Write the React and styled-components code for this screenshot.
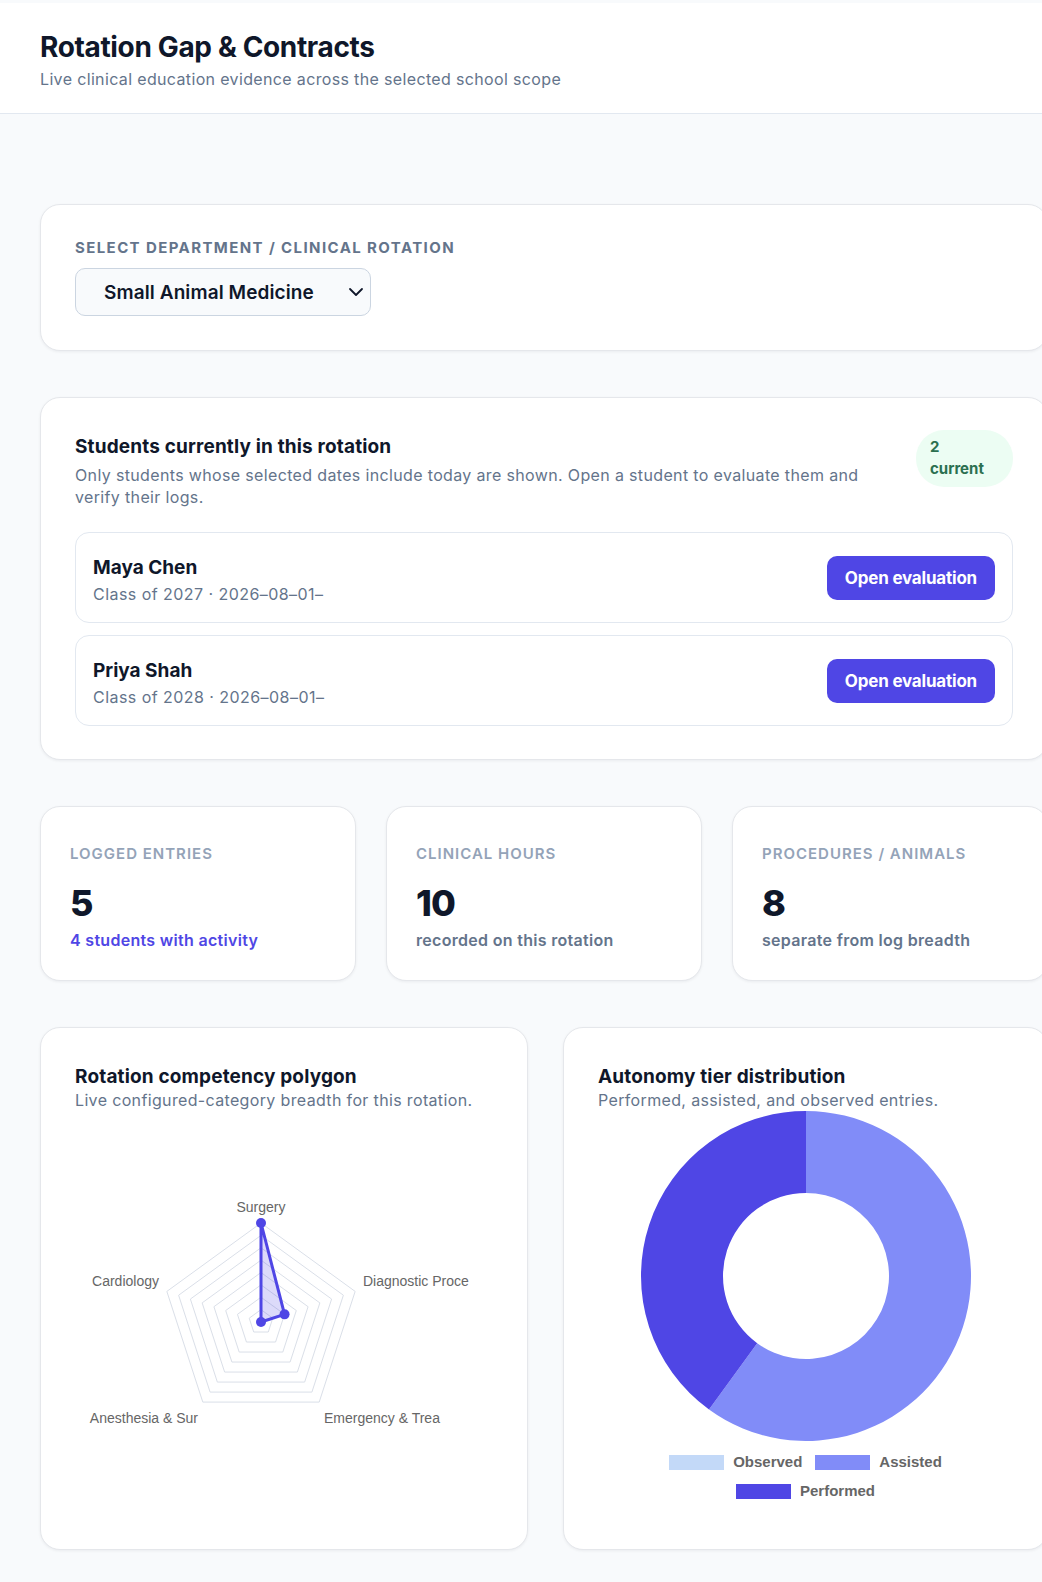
import React from 'react';
import styled, { createGlobalStyle } from 'styled-components';
import { ChevronDown } from 'lucide-react';

const GlobalStyle = createGlobalStyle`
  html, body {
    margin: 0;
    background: #f8fafc;
  }
  body {
    font-family: Inter, 'Noto Sans', sans-serif;
    color: #0f172a;
    -webkit-font-smoothing: antialiased;
  }
  * { box-sizing: border-box; }
`;

const Page = styled.div`
  padding-top: 3px;
  overflow-x: hidden;
  min-height: 1582px;
`;

const Header = styled.header`
  background: #fff;
  border-bottom: 1px solid #e2e8f0;
  padding: 26px 40px 23px;
`;

const Title = styled.h1`
  margin: 0 0 3px;
  font-size: 28px;
  line-height: 36px;
  font-weight: 700;
  letter-spacing: -0.35px;
  color: #0f172a;
`;

const Subtitle = styled.p`
  margin: 0;
  font-size: 16px;
  line-height: 22px;
  color: #64748b;
  letter-spacing: 0.35px;
`;

const Main = styled.main`
  width: 1048px;
  padding: 90px 0 48px 40px;
  display: flex;
  flex-direction: column;
  gap: 46px;
`;

const Card = styled.section`
  background: #fff;
  border: 1px solid #e5e7eb;
  border-radius: 20px;
  box-shadow: 0 1px 3px rgba(15, 23, 42, 0.06);
  padding: ${p => p.$pad || '33px 34px'};
`;

const FieldLabel = styled.label`
  display: block;
  font-size: 15px;
  line-height: 20px;
  font-weight: 700;
  letter-spacing: 1.4px;
  text-transform: uppercase;
  color: #64748b;
  margin-bottom: 10px;
`;

const Select = styled.div`
  width: 296px;
  height: 48px;
  border: 1px solid #cbd5e1;
  border-radius: 10px;
  background: #f8fafc;
  display: flex;
  align-items: center;
  justify-content: space-between;
  padding: 0 2px 0 28px;
  font-size: 19px;
  font-weight: 600;
  letter-spacing: 0.1px;
  color: #0f172a;
`;

const SectionHead = styled.div`
  display: flex;
  align-items: flex-start;
  gap: 40px;
  margin-bottom: 24px;
`;

const HeadText = styled.div`
  flex: 1;
`;

const CardTitle = styled.h2`
  margin: 0;
  font-size: 19px;
  line-height: ${p => p.$lh || '24px'};
  font-weight: 700;
  letter-spacing: 0.15px;
  color: #0f172a;
`;

const CardText = styled.p`
  margin: ${p => p.$mt || '0'} 0 0;
  font-size: 16px;
  line-height: 22px;
  color: #64748b;
  letter-spacing: 0.35px;
`;

const Badge = styled.div`
  display: flex;
  flex-direction: column;
  width: 97px;
  margin-top: -2px;
  padding: 6px 14px 7px;
  border-radius: 28px;
  background: #ecfdf3;
  color: #2b7050;
  font-size: 15px;
  line-height: 22px;
  font-weight: 700;
`;

const StudentList = styled.div`
  display: flex;
  flex-direction: column;
  gap: 12px;
`;

const StudentRow = styled.div`
  height: 91px;
  border: 1px solid #e2e8f0;
  border-radius: 14px;
  display: flex;
  align-items: center;
  justify-content: space-between;
  padding: 6px 17px 0;
`;

const StudentName = styled.div`
  font-size: 19px;
  line-height: 24px;
  font-weight: 700;
  color: #0f172a;
`;

const StudentMeta = styled.div`
  margin-top: 3px;
  font-size: 16px;
  line-height: 22px;
  color: #64748b;
  letter-spacing: 0.45px;
`;

const PrimaryButton = styled.button`
  height: 44px;
  padding: 0 18px;
  border: none;
  border-radius: 10px;
  background: #4f46e5;
  color: #fff;
  font-family: inherit;
  font-size: 17px;
  font-weight: 700;
  letter-spacing: -0.2px;
  margin-top: -6px;
  cursor: pointer;
`;

const StatGrid = styled.div`
  display: grid;
  grid-template-columns: repeat(3, 1fr);
  gap: 30px;
`;

const StatLabel = styled.div`
  font-size: 15px;
  line-height: 20px;
  font-weight: 600;
  letter-spacing: 1px;
  text-transform: uppercase;
  color: #94a3b8;
`;

const StatValue = styled.div`
  margin-top: 19px;
  font-size: 36px;
  line-height: 40px;
  font-weight: 800;
  letter-spacing: -1px;
  color: #0f172a;
`;

const StatNote = styled.div`
  margin-top: 6px;
  font-size: 16px;
  line-height: 22px;
  font-weight: 600;
  letter-spacing: 0.3px;
  color: ${p => (p.$accent ? '#4f46e5' : '#64748b')};
`;

const ChartGrid = styled.div`
  display: grid;
  grid-template-columns: 1fr 1fr;
  gap: 35px;
`;

const ChartArea = styled.div`
  display: flex;
  flex-direction: column;
  align-items: center;
`;

const Legend = styled.div`
  display: flex;
  flex-wrap: wrap;
  justify-content: center;
  max-width: 290px;
  column-gap: 13px;
  row-gap: 9px;
  margin-top: 11px;
`;

const LegendItem = styled.div`
  display: flex;
  align-items: center;
  gap: 9px;
  font-family: 'Liberation Sans', Arial, sans-serif;
  font-size: 15px;
  line-height: 20px;
  font-weight: 700;
  color: #666;
`;

const Swatch = styled.span`
  width: 55px;
  height: 15px;
  background: ${p => p.$color};
`;

const students = [
  { name: 'Maya Chen', meta: 'Class of 2027 · 2026–08–01–' },
  { name: 'Priya Shah', meta: 'Class of 2028 · 2026–08–01–' },
];

const stats = [
  { label: 'Logged entries', value: '5', note: '4 students with activity', accent: true },
  { label: 'Clinical hours', value: '10', note: 'recorded on this rotation' },
  { label: 'Procedures / animals', value: '8', note: 'separate from log breadth' },
];

const RADAR = { cx: 186, cy: 211, r: 99, rings: 8 };

const axes = [
  { label: 'Surgery', value: 1, x: 186, y: 101, anchor: 'middle' },
  { label: 'Diagnostic Proce', value: 0.25, x: 288, y: 175, anchor: 'start' },
  { label: 'Emergency & Trea', value: 0, x: 249, y: 312, anchor: 'start' },
  { label: 'Anesthesia & Sur', value: 0, x: 123, y: 312, anchor: 'end' },
  { label: 'Cardiology', value: 0, x: 84, y: 175, anchor: 'end' },
];

const radarPoint = (i, frac) => {
  const a = (i * 72 * Math.PI) / 180;
  return [RADAR.cx + frac * RADAR.r * Math.sin(a), RADAR.cy - frac * RADAR.r * Math.cos(a)];
};

const RadarChart = () => {
  const rings = Array.from({ length: RADAR.rings }, (_, k) => (k + 1) / RADAR.rings);
  const data = axes.map((ax, i) => radarPoint(i, ax.value));
  return (
    <svg width="418" height="389" viewBox="0 0 418 389">
      {rings.map(f => (
        <polygon
          key={f}
          points={axes.map((_, i) => radarPoint(i, f).join(',')).join(' ')}
          fill="none"
          stroke="#dadfe8"
          strokeWidth="1"
        />
      ))}
      <polygon
        points={data.map(p => p.join(',')).join(' ')}
        fill="rgba(79, 70, 229, 0.2)"
        stroke="#4f46e5"
        strokeWidth="3"
        strokeLinejoin="round"
      />
      {[data[0], data[1], data[2]].map((p, i) => (
        <circle key={i} cx={p[0]} cy={p[1]} r="5" fill="#4f46e5" />
      ))}
      {axes.map(ax => (
        <text
          key={ax.label}
          x={ax.x}
          y={ax.y}
          textAnchor={ax.anchor}
          fontFamily="'Liberation Sans', Arial, sans-serif"
          fontSize="14"
          fill="#666"
        >
          {ax.label}
        </text>
      ))}
    </svg>
  );
};

const arcPath = (cx, cy, R, r, a0, a1) => {
  const rad = a => ((a - 90) * Math.PI) / 180;
  const p = (rr, a) => [cx + rr * Math.cos(rad(a)), cy + rr * Math.sin(rad(a))];
  const large = a1 - a0 > 180 ? 1 : 0;
  const [x0, y0] = p(R, a0);
  const [x1, y1] = p(R, a1);
  const [x2, y2] = p(r, a1);
  const [x3, y3] = p(r, a0);
  return `M${x0} ${y0} A${R} ${R} 0 ${large} 1 ${x1} ${y1} L${x2} ${y2} A${r} ${r} 0 ${large} 0 ${x3} ${y3} Z`;
};

const tiers = [
  { label: 'Observed', value: 0, color: '#c3d9f8' },
  { label: 'Assisted', value: 3, color: '#818cf8' },
  { label: 'Performed', value: 2, color: '#4f46e5' },
];

const DonutChart = () => {
  const total = tiers.reduce((s, t) => s + t.value, 0);
  let start = 0;
  const slices = tiers
    .filter(t => t.value > 0)
    .map(t => {
      const end = start + (t.value / total) * 360;
      const d = arcPath(165, 165, 165, 83, start, end);
      start = end;
      return <path key={t.label} d={d} fill={t.color} />;
    });
  return (
    <svg width="330" height="330" viewBox="0 0 330 330">
      {slices}
    </svg>
  );
};

const App = () => {
  return (
    <Page>
      <GlobalStyle />
      <Header>
        <Title>Rotation Gap &amp; Contracts</Title>
        <Subtitle>Live clinical education evidence across the selected school scope</Subtitle>
      </Header>
      <Main>
        <Card $pad="33px 34px 34px">
          <FieldLabel>Select department / clinical rotation</FieldLabel>
          <Select>
            Small Animal Medicine
            <ChevronDown size={24} strokeWidth={1.8} color="#0f172a" />
          </Select>
        </Card>

        <Card $pad="34px 34px 33px">
          <SectionHead>
            <HeadText>
              <CardTitle $lh="30px">Students currently in this rotation</CardTitle>
              <CardText $mt="2px">
                Only students whose selected dates include today are shown. Open a student to evaluate them and verify their logs.
              </CardText>
            </HeadText>
            <Badge>
              <span>2</span>
              <span>current</span>
            </Badge>
          </SectionHead>
          <StudentList>
            {students.map(s => (
              <StudentRow key={s.name}>
                <div>
                  <StudentName>{s.name}</StudentName>
                  <StudentMeta>{s.meta}</StudentMeta>
                </div>
                <PrimaryButton>Open evaluation</PrimaryButton>
              </StudentRow>
            ))}
          </StudentList>
        </Card>

        <StatGrid>
          {stats.map(s => (
            <Card key={s.label} $pad="37px 29px 29px">
              <StatLabel>{s.label}</StatLabel>
              <StatValue>{s.value}</StatValue>
              <StatNote $accent={s.accent}>{s.note}</StatNote>
            </Card>
          ))}
        </StatGrid>

        <ChartGrid>
          <Card $pad="37px 34px 45px">
            <CardTitle>Rotation competency polygon</CardTitle>
            <CardText>Live configured-category breadth for this rotation.</CardText>
            <RadarChart />
          </Card>
          <Card $pad="37px 34px 45px">
            <CardTitle>Autonomy tier distribution</CardTitle>
            <CardText>Performed, assisted, and observed entries.</CardText>
            <ChartArea>
              <DonutChart />
              <Legend>
                {tiers.map(t => (
                  <LegendItem key={t.label}>
                    <Swatch $color={t.color} />
                    {t.label}
                  </LegendItem>
                ))}
              </Legend>
            </ChartArea>
          </Card>
        </ChartGrid>
      </Main>
    </Page>
  );
};

export default App;
